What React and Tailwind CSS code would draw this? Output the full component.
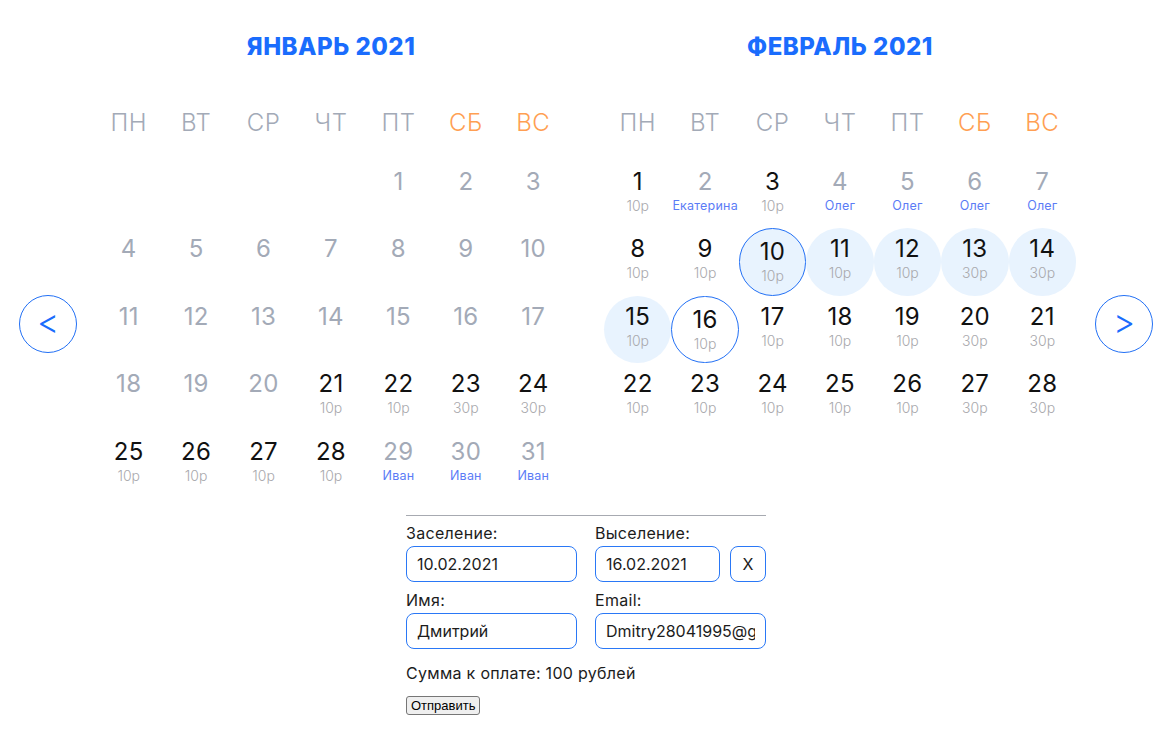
import React from "react";

const JAN = (() => {
  const cells = [null, null, null, null];
  for (let d = 1; d <= 31; d++) {
    let c = { d, tone: "gray" };
    if (d >= 21 && d <= 28) {
      c = { d, tone: "black", sub: [23, 24].includes(d) ? "30р" : "10р", subTone: "price" };
    } else if (d >= 29) {
      c = { d, tone: "gray", sub: "Иван", subTone: "name" };
    }
    cells.push(c);
  }
  return cells;
})();

const FEB = (() => {
  const cells = [];
  const thirty = [13, 14, 20, 21, 27, 28];
  for (let d = 1; d <= 28; d++) {
    let c = { d, tone: "black", sub: thirty.includes(d) ? "30р" : "10р", subTone: "price" };
    if (d === 2) c = { d, tone: "gray", sub: "Екатерина", subTone: "name" };
    if (d >= 4 && d <= 7) c = { d, tone: "gray", sub: "Олег", subTone: "name" };
    if (d >= 10 && d <= 15) c.fill = true;
    if (d === 10 || d === 16) c.ring = true;
    cells.push(c);
  }
  return cells;
})();

const WEEK = ["ПН", "ВТ", "СР", "ЧТ", "ПТ", "СБ", "ВС"];

function Cell({ c }) {
  if (!c) return <div className="h-[67.43px]" />;
  const cls = [
    "h-[67.43px] flex flex-col items-center rounded-full",
    c.ring ? "border border-[#2270f5] pt-[11px]" : "pt-[9px]",
    c.fill ? "bg-[#e8f3fe]" : "",
  ].join(" ");
  return (
    <div className={cls}>
      <div
        className={
          "text-[24px] leading-[24px] tracking-[0.3px] " +
          (c.tone === "black" ? "text-[#111111]" : "text-[#a3aab7]")
        }
      >
        {c.d}
      </div>
      {c.sub && (
        <div
          className={
            "mt-[4px] leading-[16px] whitespace-nowrap " +
            (c.subTone === "name"
              ? "text-[12.5px] text-[#5b7cf6] tracking-[0.2px]"
              : "text-[14px] text-[#a9a9ad] font-light")
          }
        >
          {c.sub}
        </div>
      )}
    </div>
  );
}

function Month({ title, cells }) {
  return (
    <div className="w-[472px] flex flex-col">
      <div className="h-[32px] leading-[32px] text-center text-[24px] font-extrabold text-[#1a6cfd] tracking-[0.5px]">
        {title}
      </div>
      <div className="mt-[40px] h-[40px] grid grid-cols-7 items-center">
        {WEEK.map((w, i) => (
          <div
            key={w}
            className={
              "text-center text-[24px] leading-[40px] font-light tracking-[0.5px] " +
              (i >= 5 ? "text-[#ff9f53]" : "text-[#a3aab7]")
            }
          >
            {w}
          </div>
        ))}
      </div>
      <div className="mt-[18px] grid grid-cols-7">
        {cells.map((c, i) => (
          <Cell key={i} c={c} />
        ))}
      </div>
    </div>
  );
}

function NavBtn({ children }) {
  return (
    <div className="mt-[264px] w-[58px] h-[58px] rounded-full border border-[#2270f5] flex items-center justify-center text-[#1a6cfd] text-[34px] leading-none font-light pb-[4px]">
      {children}
    </div>
  );
}

const inputCls =
  "w-full h-[36px] rounded-[8px] border border-[#2a78f6] px-[10px] text-[16px] text-[#1c1c1c] outline-none bg-white";

export default function App() {
  return (
    <div
      className="w-[1172px] min-h-[756px] bg-white pt-[31px]"
      style={{ fontFamily: "Inter, 'Noto Sans', sans-serif" }}
    >
      <div className="flex justify-center items-start">
        <NavBtn>&lt;</NavBtn>
        <div className="ml-[18px]">
          <Month title="ЯНВАРЬ 2021" cells={JAN} />
        </div>
        <div className="ml-[37px]">
          <Month title="ФЕВРАЛЬ 2021" cells={FEB} />
        </div>
        <div className="ml-[19px]">
          <NavBtn>&gt;</NavBtn>
        </div>
      </div>

      <div className="w-[360px] mx-auto mt-[17px] border-t border-[#a7aab1] pt-[7px] text-[#1c1c1c]">
        <div className="grid grid-cols-2 gap-x-[18px] gap-y-[8px]">
          <div>
            <div className="text-[16px] leading-[20px] tracking-[0.3px]">Заселение:</div>
            <input className={inputCls + " mt-[3px]"} readOnly value="10.02.2021" />
          </div>
          <div>
            <div className="text-[16px] leading-[20px] tracking-[0.3px]">Выселение:</div>
            <div className="mt-[3px] flex gap-[10px]">
              <input className={inputCls + " flex-1 min-w-0"} readOnly value="16.02.2021" />
              <div className="w-[36px] h-[36px] shrink-0 rounded-[8px] border border-[#2a78f6] flex items-center justify-center text-[16px]">
                X
              </div>
            </div>
          </div>
          <div>
            <div className="text-[16px] leading-[20px] tracking-[0.3px]">Имя:</div>
            <input className={inputCls + " mt-[3px]"} readOnly value="Дмитрий" />
          </div>
          <div>
            <div className="text-[16px] leading-[20px] tracking-[0.3px]">Email:</div>
            <input className={inputCls + " mt-[3px]"} readOnly value="Dmitry28041995@gmail.com" />
          </div>
        </div>
        <div className="mt-[14px] text-[16px] leading-[20px] tracking-[0.3px]">Сумма к оплате: 100 рублей</div>
        <button
          className="mt-[13px] h-[19px] px-[4px] bg-[#efefef] border border-[#767676] rounded-[3px] text-[13px] leading-none text-black"
          style={{ fontFamily: "'Liberation Sans', Arial, sans-serif" }}
        >
          Отправить
        </button>
      </div>
    </div>
  );
}
